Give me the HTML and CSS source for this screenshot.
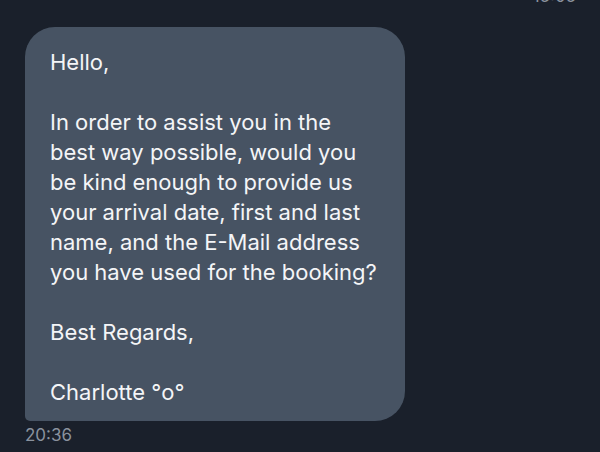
FILE: index.html
```html
<!DOCTYPE html>
<html>
<head>
<meta charset="utf-8">
<link rel="stylesheet" href="styles.css">
</head>
<body>
<div class="chat">
  <div class="prev-time">15:05</div>
  <div class="msg">
    <div class="bubble">
      <p>Hello,</p>
      <p class="gap">In order to assist you in the<br>best way possible, would you<br>be kind enough to provide us<br>your arrival date, first and last<br>name, and the E-Mail address<br>you have used for the booking?</p>
      <p class="gap">Best Regards,</p>
      <p class="gap">Charlotte °o°</p>
    </div>
    <div class="time">20:36</div>
  </div>
</div>
</body>
</html>
```
FILE: styles.css
```css
html, body {
  margin: 0;
  padding: 0;
  background: #1a202b;
}
body {
  width: 600px;
  height: 452px;
  overflow: hidden;
  font-family: Inter, "Noto Sans", sans-serif;
}
.chat {
  display: flex;
  flex-direction: column;
}
.prev-time {
  align-self: flex-end;
  margin-top: -13px;
  margin-right: 24px;
  height: 18px;
  font-size: 17px;
  line-height: 18px;
  color: #8a929e;
}
.msg {
  display: flex;
  flex-direction: column;
  align-items: flex-start;
  margin-left: 25px;
  margin-top: 22px;
}
.bubble {
  box-sizing: border-box;
  width: 380px;
  background: #475363;
  border-radius: 30px 30px 30px 5px;
  padding: 20px 20px 14px 25px;
  color: #f4f5f7;
  font-size: 22px;
  line-height: 30px;
  letter-spacing: 0;
}
.bubble p {
  margin: 0;
}
.bubble p.gap {
  margin-top: 30px;
}
.time {
  margin-top: 4px;
  font-size: 17px;
  line-height: 20px;
  color: #8a929e;
}
```
